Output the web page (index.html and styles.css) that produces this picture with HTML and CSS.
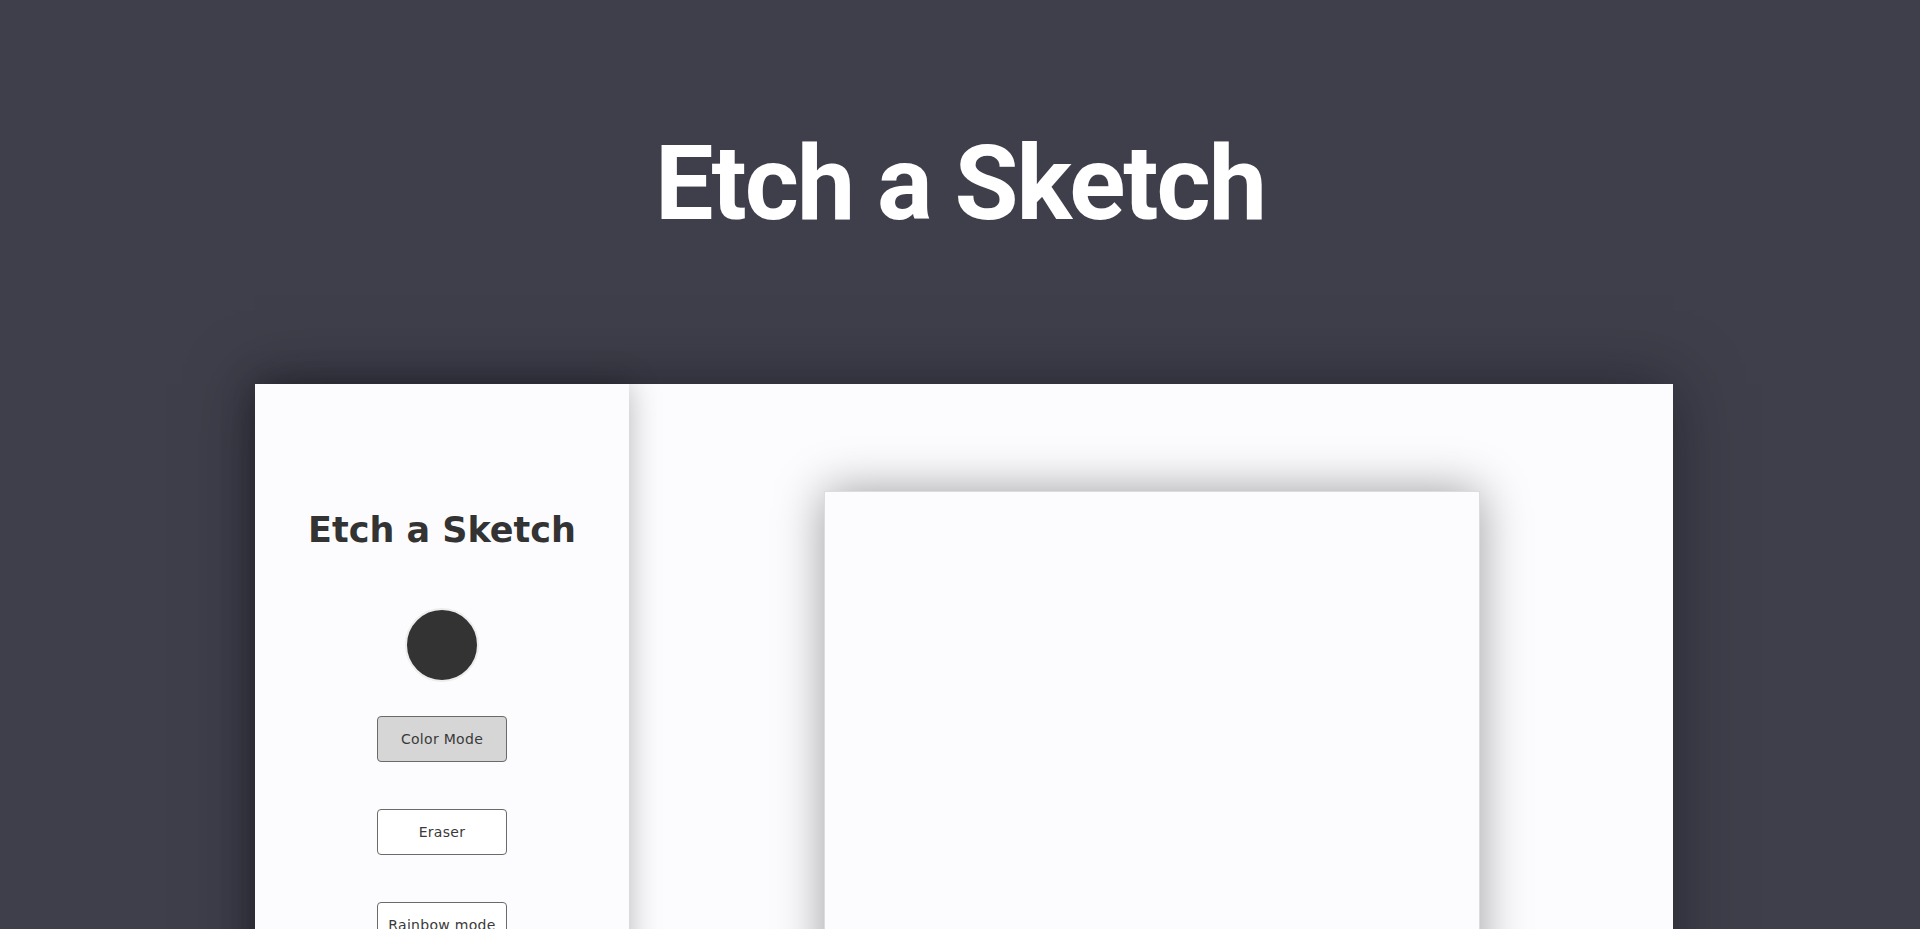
FILE: index.html
```html
<!DOCTYPE html>
<html lang="en">
<head>
<meta charset="utf-8">
<title>Etch a Sketch</title>
<link rel="stylesheet" href="styles.css">
</head>
<body>
<header class="page-header">
  <h1 class="page-title">Etch a Sketch</h1>
</header>
<main class="app">
  <aside class="sidebar">
    <h2 class="sidebar-title">Etch a Sketch</h2>
    <div class="color-swatch"></div>
    <button class="mode-btn active">Color Mode</button>
    <button class="mode-btn">Eraser</button>
    <button class="mode-btn">Rainbow mode</button>
    <button class="mode-btn">Clear</button>
  </aside>
  <section class="board">
    <div class="grid"></div>
  </section>
</main>
</body>
</html>
```
FILE: styles.css
```css
html, body {
  margin: 0;
  padding: 0;
}
body {
  background: #3f3f4b;
  overflow: hidden;
  height: 929px;
}
.page-header {
  height: 384px;
  box-sizing: border-box;
  padding-top: 123px;
}
.page-title {
  margin: 0;
  text-align: center;
  color: #ffffff;
  font-family: Roboto, "Liberation Sans", sans-serif;
  font-weight: 700;
  font-size: 104px;
  letter-spacing: -2px;
  line-height: normal;
}
.app {
  display: flex;
  width: 1418px;
  height: 900px;
  margin-left: 255px;
  background: #fcfcfe;
  box-shadow: 0 0 60px rgba(20, 20, 30, 0.55);
}
.sidebar {
  position: relative;
  z-index: 1;
  width: 374px;
  flex: none;
  background: #fcfcfe;
  box-shadow: 0 0 30px rgba(0, 0, 0, 0.28);
  display: flex;
  flex-direction: column;
  align-items: center;
  padding-top: 125px;
  box-sizing: border-box;
}
.sidebar-title {
  margin: 0;
  color: #333333;
  font-family: "DejaVu Sans", sans-serif;
  font-weight: 700;
  font-size: 35px;
  line-height: 1.2;
}
.color-swatch {
  margin-top: 57px;
  width: 70px;
  height: 70px;
  border-radius: 50%;
  background: #333333;
  border: 2px solid #ededed;
}
.mode-btn {
  margin-top: 34px;
  width: 130px;
  height: 46px;
  border: 1px solid #6a6a6a;
  border-radius: 4px;
  background: #ffffff;
  color: #3a3a3a;
  font-family: "DejaVu Sans", sans-serif;
  font-size: 14px;
  letter-spacing: 0.3px;
  padding: 0;
}
.mode-btn + .mode-btn {
  margin-top: 47px;
}
.mode-btn.active {
  background: #d6d6d6;
}
.board {
  flex: 1;
  display: flex;
  justify-content: center;
  padding-top: 107px;
  padding-left: 2px;
}
.grid {
  width: 654px;
  height: 654px;
  background: #fcfcfe;
  border: 1px solid #dcdcdc;
  box-shadow: 0 0 45px rgba(0, 0, 0, 0.38);
}
```
